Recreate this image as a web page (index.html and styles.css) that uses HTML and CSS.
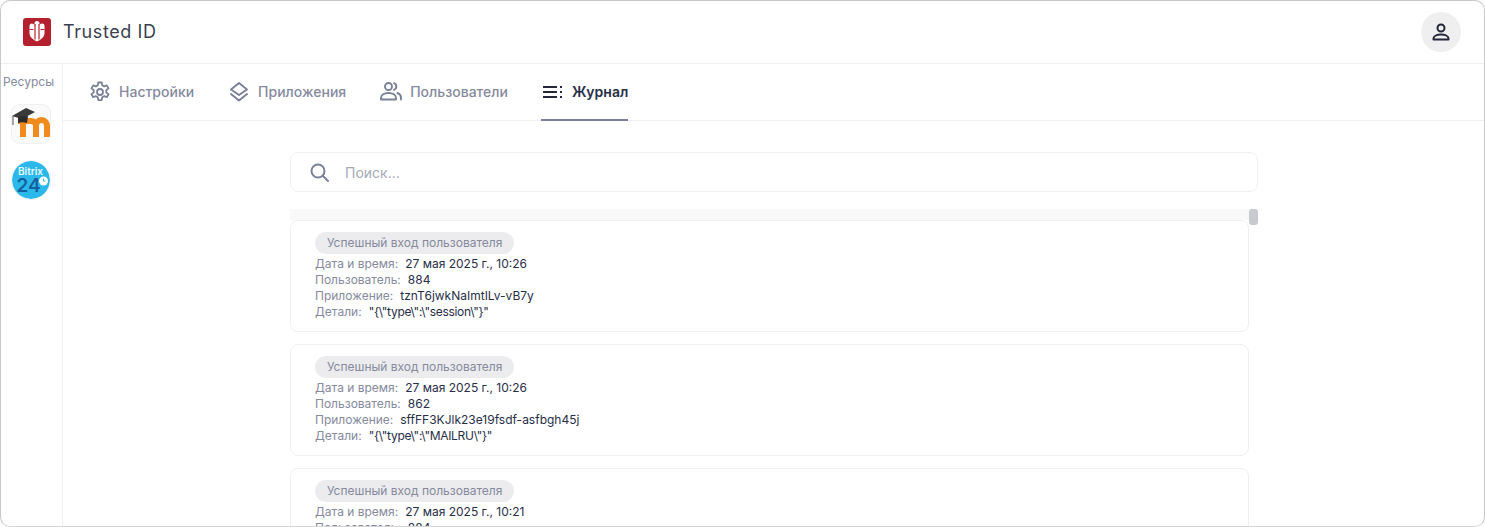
FILE: index.html
```html
<!DOCTYPE html>
<html lang="en">
  <head>
    <meta charset="UTF-8">
    <title>Trusted ID</title>
    <link rel="stylesheet" href="styles.css">
  </head>
  <body>
    <div class="window">
      <header class="topbar">
        <div class="brand">
          <svg class="brand-logo" width="28" height="28" viewBox="0 0 28 28">
            <rect width="28" height="28" rx="3" fill="#b5202e"/>
            <path d="M6.500 8a2.500 2.500 0 0 1 5 0V5.500a1.300 1.300 0 0 1 5 0V8a2.500 2.500 0 0 1 5 0v7c0 4-3.500 6.500-7.500 8.500C10 21.500 6.500 19 6.500 15z" fill="#fff"/>
            <path d="M6.500 11.500h4M17.500 11.500h4" stroke="#b5202e" stroke-width="1"/>
            <path d="M12 6v15.500M16 6v15.500" stroke="#b5202e" stroke-width="1.200"/>
          </svg>
          <span class="brand-name">Trusted ID</span>
        </div>
        <button class="avatar">
          <svg width="24" height="24" viewBox="0 0 24 24" fill="none" stroke="#23293b" stroke-width="2">
            <circle cx="12" cy="8" r="3.500"/>
            <path d="M4.500 19.500v-1c0-2.500 3.500-4 7.500-4s7.500 1.500 7.500 4v1z" stroke-linejoin="round"/>
          </svg>
        </button>
      </header>

      <div class="body">
        <aside class="sidebar">
          <div class="sidebar-title">Ресурсы</div>
          <div class="resource">
            <svg width="38" height="38" viewBox="0 0 38 38">
              <path d="M11 32V16M6 16h13c3 0 5 2 5 5v11M24 21c0-3 2-6 5.500-6s5.500 3 5.500 6v11" fill="none" stroke="#ef8a1c" stroke-width="6"/>
              <path d="M0 11 14 3l9 4-13 7z" fill="#3a3a3a"/>
              <path d="M6 12v6c3-1 6-1 9 0l1-7z" fill="#2c2c2c"/>
              <path d="M1 11v9" stroke="#555" stroke-width="1"/>
            </svg>
          </div>
          <div class="resource resource-round">
            <svg width="38" height="38" viewBox="0 0 38 38">
              <circle cx="19" cy="19" r="19" fill="#2bb9ec"/>
              <text class="bitrix-name" x="18.500" y="14">Bitrix</text>
              <text class="bitrix-num" x="4.500" y="31">24</text>
              <circle cx="31.500" cy="20" r="4.500" fill="#fff"/>
              <path d="M31.500 17.500V20h2" fill="none" stroke="#2bb9ec" stroke-width="1"/>
            </svg>
          </div>
        </aside>

        <main class="main">
          <nav class="tabs">
            <a class="tab">
              <svg width="24" height="24" viewBox="0 0 24 24" fill="none" stroke="#7b8198" stroke-width="1.800" stroke-linejoin="round">
                <path d="M10.300 2.500h3.400l.5 2.800 1.900 1.100 2.700-1 1.700 3-2.200 1.800v2.200l2.200 1.800-1.700 3-2.700-1-1.900 1.100-.5 2.800h-3.400l-.5-2.800-1.900-1.100-2.700 1-1.700-3 2.200-1.800V10.200L3.500 8.400l1.700-3 2.700 1 1.900-1.100z"/>
                <circle cx="12" cy="12" r="3"/>
              </svg>
              Настройки
            </a>
            <a class="tab">
              <svg width="24" height="24" viewBox="0 0 24 24" fill="none" stroke="#7b8198" stroke-width="1.900" stroke-linejoin="round" stroke-linecap="round">
                <path d="M12 3 20 9.500 12 15 4 9.500z"/>
                <path d="M4 14l8 6.500 8-6.500"/>
              </svg>
              Приложения
            </a>
            <a class="tab">
              <svg width="24" height="24" viewBox="0 0 24 24" fill="none" stroke="#7b8198" stroke-width="1.900" stroke-linecap="round" stroke-linejoin="round">
                <circle cx="9.500" cy="6.500" r="3.500"/>
                <path d="M2 19.500V18c0-3 3-5 7.500-5s7.500 2 7.500 5v1.500z"/>
                <path d="M15 3.200a3.500 3.500 0 0 1 0 6.600M18.500 13c2 .8 3.500 2.300 3.500 4.500v2"/>
              </svg>
              Пользователи
            </a>
            <a class="tab tab-active">
              <svg width="24" height="24" viewBox="0 0 24 24" fill="none" stroke="#23293b" stroke-width="2">
                <path d="M2 7h14M2 12h14M2 17h14"/>
                <path d="M19 7h2M19 12h2M19 17h2" stroke-width="1.800"/>
              </svg>
              Журнал
            </a>
          </nav>

          <div class="content">
            <div class="search">
              <svg width="24" height="24" viewBox="0 0 24 24" fill="none" stroke="#7b8198" stroke-width="2" stroke-linecap="round">
                <circle cx="10" cy="10" r="6.500"/>
                <path d="m15 15 5 5"/>
              </svg>
              <span class="search-text">Поиск...</span>
            </div>

            <div class="log">
              <div class="log-track">
                <div class="log-thumb"></div>
              </div>
              <div class="log-list">
                <div class="log-card">
                  <span class="pill">Успешный вход пользователя</span>
                  <div class="row"><span class="key">Дата и время:</span><span class="val">27 мая 2025 г., 10:26</span></div>
                  <div class="row"><span class="key">Пользователь:</span><span class="val">884</span></div>
                  <div class="row"><span class="key">Приложение:</span><span class="val">tznT6jwkNaImtILv-vB7y</span></div>
                  <div class="row"><span class="key">Детали:</span><span class="val val-json">"{\"type\":\"session\"}"</span></div>
                </div>
                <div class="log-card">
                  <span class="pill">Успешный вход пользователя</span>
                  <div class="row"><span class="key">Дата и время:</span><span class="val">27 мая 2025 г., 10:26</span></div>
                  <div class="row"><span class="key">Пользователь:</span><span class="val">862</span></div>
                  <div class="row"><span class="key">Приложение:</span><span class="val">sffFF3KJlk23e19fsdf-asfbgh45j</span></div>
                  <div class="row"><span class="key">Детали:</span><span class="val val-json">"{\"type\":\"MAILRU\"}"</span></div>
                </div>
                <div class="log-card">
                  <span class="pill">Успешный вход пользователя</span>
                  <div class="row"><span class="key">Дата и время:</span><span class="val">27 мая 2025 г., 10:21</span></div>
                  <div class="row"><span class="key">Пользователь:</span><span class="val">884</span></div>
                </div>
              </div>
            </div>
          </div>
        </main>
      </div>
    </div>
  </body>
</html>
```

FILE: styles.css
```css
:root {
  --dark-text: #282e48;
  --muted-text: #858a9e;
  --border-color: #eeeff2;
}

* {
  margin: 0;
  padding: 0;
  box-sizing: border-box;
}

html, body {
  height: 527px;
  overflow: hidden;
  background: #fff;
}

body {
  font-family: Inter, "Noto Sans", sans-serif;
  color: var(--dark-text);
  font-size: 12px;
}

.window {
  height: 527px;
  border: 1px solid #c9c9c9;
  border-bottom-color: #d4d4d4;
  border-radius: 10px;
  overflow: hidden;
  display: flex;
  flex-direction: column;
}

.topbar {
  height: 63px;
  flex-shrink: 0;
  display: flex;
  align-items: center;
  justify-content: space-between;
  padding: 0 23px 1px 22px;
  border-bottom: 1px solid var(--border-color);
}

.brand {
  display: flex;
  align-items: center;
  gap: 12px;
}

.brand-name {
  font-size: 18px;
  color: #3a3f4e;
  letter-spacing: 0.6px;
}

.avatar {
  width: 40px;
  height: 40px;
  border: none;
  border-radius: 50%;
  background: #efefef;
  display: flex;
  align-items: center;
  justify-content: center;
}

.body {
  flex: 1;
  display: flex;
  min-height: 0;
}

.sidebar {
  width: 62px;
  flex-shrink: 0;
  border-right: 1px solid var(--border-color);
  display: flex;
  flex-direction: column;
  gap: 16px;
  padding: 10px 0 0 2px;
}

.sidebar-title {
  font-size: 12px;
  color: var(--muted-text);
  line-height: 15px;
  margin-bottom: -1px;
}

.resource {
  width: 40px;
  height: 40px;
  margin-left: 8px;
  border: 1px solid #f0f0f0;
  border-radius: 9px;
  overflow: hidden;
  background: #fafafa;
}

.resource-round {
  border-radius: 50%;
  background: #fff;
}

.bitrix-name {
  font-size: 10px;
  font-weight: 600;
  fill: #e8f8fe;
  text-anchor: middle;
}

.bitrix-num {
  font-size: 19px;
  font-weight: 600;
  fill: #14609f;
}

.main {
  flex: 1;
  min-width: 0;
  display: flex;
  flex-direction: column;
}

.tabs {
  height: 57px;
  flex-shrink: 0;
  display: flex;
  gap: 33px;
  padding-left: 25px;
  border-bottom: 1px solid var(--border-color);
}

.tab {
  display: flex;
  align-items: center;
  gap: 7px;
  margin-bottom: -1px;
  font-size: 14px;
  font-weight: 500;
  color: var(--muted-text);
  border-bottom: 2px solid transparent;
}

.tab-active {
  color: var(--dark-text);
  font-weight: 600;
  border-bottom-color: #7b8198;
}

.content {
  width: 968px;
  margin-left: 227px;
  padding-top: 31px;
  flex: 1;
  min-height: 0;
  display: flex;
  flex-direction: column;
}

.search {
  height: 40px;
  flex-shrink: 0;
  display: flex;
  align-items: center;
  gap: 11px;
  padding: 1px 0 0 17px;
  border: 1px solid var(--border-color);
  border-radius: 8px;
}

.search-text {
  font-size: 14px;
  color: #a4a8b7;
  margin-left: 2px;
}

.log {
  position: relative;
  margin-top: 17px;
  flex: 1;
  min-height: 0;
}

.log-track {
  position: absolute;
  top: 0;
  left: 0;
  right: 0;
  height: 11px;
  background: #f9f9fa;
}

.log-thumb {
  position: absolute;
  top: 0;
  right: 0;
  width: 9px;
  height: 16px;
  border-radius: 3px;
  background: #c8cacf;
}

.log-list {
  padding-top: 11px;
  width: 959px;
  display: flex;
  flex-direction: column;
  gap: 12px;
}

.log-card {
  position: relative;
  height: 112px;
  flex-shrink: 0;
  padding: 11px 24px;
  border: 1px solid var(--border-color);
  border-radius: 8px;
  background: #fff;
}

.pill {
  display: inline-block;
  height: 22px;
  line-height: 22px;
  padding: 0 12px;
  border-radius: 11px;
  background: #ececee;
  color: var(--muted-text);
  font-size: 12px;
  margin-bottom: 2px;
}

.row {
  display: flex;
  gap: 7px;
  line-height: 16px;
  font-size: 12px;
}

.key {
  color: var(--muted-text);
}

.val {
  color: var(--dark-text);
}

.val-json {
  letter-spacing: -0.3px;
}
```
